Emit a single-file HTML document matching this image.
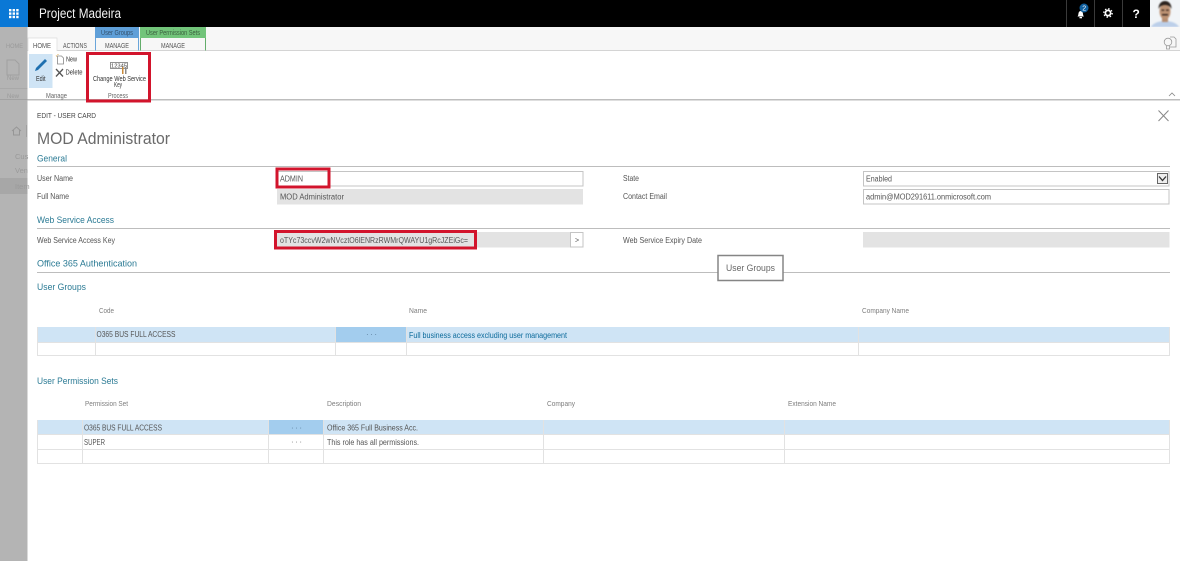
<!DOCTYPE html>
<html lang="en"><head><meta charset="utf-8"><title>Project Madeira</title>
<style>
html,body{margin:0;padding:0;width:1180px;height:561px;overflow:hidden;background:#fff}
svg{display:block;filter:blur(.35px)}
text{font-family:"Liberation Sans",sans-serif;font-size:8px;fill:#555}
.sec{font-size:9.5px;fill:#2a7a94}
.hd{fill:#7d7d7d;font-size:7.5px}
.sb{fill:#9a9a9a;font-size:7.5px}
.ph{filter:blur(.7px)}
</style></head><body>
<svg width="1180" height="561" viewBox="0 0 1180 561" xmlns="http://www.w3.org/2000/svg">
<rect width="1180" height="561" fill="#fff"/>
<!-- top bar -->
<rect width="1180" height="27" fill="#000"/>
<rect width="28" height="27" fill="#0a78d6"/>
<g fill="#fff"><rect x="9" y="9" width="2.4" height="2.4"/><rect x="12.6" y="9" width="2.4" height="2.4"/><rect x="16.2" y="9" width="2.4" height="2.4"/><rect x="9" y="12.4" width="2.4" height="2.4"/><rect x="12.6" y="12.4" width="2.4" height="2.4"/><rect x="16.2" y="12.4" width="2.4" height="2.4"/><rect x="9" y="15.8" width="2.4" height="2.4"/><rect x="12.6" y="15.8" width="2.4" height="2.4"/><rect x="16.2" y="15.8" width="2.4" height="2.4"/></g>
<text x="39" y="18" style="font-size:13.5px;fill:#f2f2f2" textLength="82" lengthAdjust="spacingAndGlyphs">Project Madeira</text>
<g fill="#3a3a3a"><rect x="1066" width="1" height="27"/><rect x="1094" width="1" height="27"/><rect x="1122" width="1" height="27"/></g>
<!-- bell -->
<path d="M1077.500 16.500c1-1 .8-3 1.200-4 .4-1 1.100-1.500 2-1.500s1.600.5 2 1.500c.4 1 .2 3 1.200 4z" fill="#fff"/>
<rect x="1079.500" y="17" width="2.500" height="1.300" fill="#fff"/>
<circle cx="1084" cy="8" r="4.500" fill="#0f5f9e"/>
<text x="1082.300" y="10.500" style="font-size:7px;fill:#fff">2</text>
<!-- gear -->
<circle cx="1108" cy="13" r="2.600" fill="none" stroke="#fff" stroke-width="1.700"/>
<circle cx="1108" cy="13" r="4.200" fill="none" stroke="#fff" stroke-width="1.300" stroke-dasharray="1.500 1.800"/>
<text x="1132.500" y="18" style="font-size:12px;font-weight:bold;fill:#fff">?</text>
<!-- photo -->
<rect x="1150" y="0" width="30" height="27" fill="#f1f4f7"/>
<g class="ph">
<path d="M1151 27c2-4 8-6 14-6s12 2 14 6z" fill="#bccfe9"/>
<rect x="1162" y="17" width="6" height="5" fill="#b58c70"/>
<ellipse cx="1165" cy="11.500" rx="5.500" ry="8" fill="#bd9273"/>
<path d="M1158.500 9c0-6 3.500-8 6.500-8s6.500 2 6.500 8c-1.500-3-3.500-4-6.500-4s-5 1-6.500 4z" fill="#2a211c"/>
<rect x="1161.500" y="9.500" width="2.800" height="1.300" fill="#3b2a22"/><rect x="1166" y="9.500" width="2.800" height="1.300" fill="#3b2a22"/>
<rect x="1162" y="14" width="6" height="1.500" fill="#3b2a22"/>
</g>
<!-- ribbon -->
<rect x="27" y="27" width="1153" height="23.500" fill="#f7f7f7"/>
<rect x="27" y="50" width="1153" height="1" fill="#d4d4d4"/>
<rect x="27" y="99" width="1153" height="1.500" fill="#bdbdbd"/>
<!-- sidebar -->
<rect x="0" y="27" width="27.500" height="534" fill="#b4b4b4"/>
<rect x="0" y="178" width="27.500" height="16" fill="#a7a7a7"/>
<rect x="0" y="88" width="27.500" height="1" fill="#a9a9a9"/>
<rect x="0" y="99" width="27.500" height="1" fill="#a2a2a2"/>
<text class="sb" x="6" y="48" textLength="17" lengthAdjust="spacingAndGlyphs" style="font-size:6.500px">HOME</text>
<path d="M7 60h8l4 4v11H7z" fill="none" stroke="#a0a0a0"/>
<text class="sb" x="7" y="80" textLength="12" lengthAdjust="spacingAndGlyphs" style="font-size:6.500px">New</text>
<text class="sb" x="7" y="98" textLength="12" lengthAdjust="spacingAndGlyphs" style="font-size:6.500px">New</text>
<path d="M14 131l4.500-4 4.500 4M15.500 130v5h6v-5" fill="none" stroke="#969696" transform="translate(-2 0)"/>
<rect x="26" y="125" width="1" height="12" fill="#a0a0a0"/>
<text class="sb" x="15" y="159">Cus</text>
<text class="sb" x="15" y="173">Ven</text>
<text class="sb" x="15" y="189">Item</text>
<!-- tabs -->
<rect x="28" y="38" width="29" height="13" fill="#fff"/>
<path d="M28 51V38H57V51" fill="none" stroke="#dcdcdc" stroke-width=".7"/>
<text x="33" y="48" textLength="18" lengthAdjust="spacingAndGlyphs" style="font-size:7.500px">HOME</text>
<text x="63" y="48" textLength="24" lengthAdjust="spacingAndGlyphs" style="font-size:7.500px">ACTIONS</text>
<rect x="95" y="27" width="44" height="11" fill="#5f9fd8"/>
<text x="101" y="35" textLength="32" lengthAdjust="spacingAndGlyphs" style="font-size:7px;fill:#33506b">User Groups</text>
<path d="M95.500 38v12.500M138.500 38v12.500" stroke="#6aa5da" fill="none"/>
<text x="105" y="48" textLength="24" lengthAdjust="spacingAndGlyphs" style="font-size:7.500px">MANAGE</text>
<rect x="140" y="27" width="66" height="11" fill="#72c47a"/>
<text x="146" y="35" textLength="54" lengthAdjust="spacingAndGlyphs" style="font-size:7px;fill:#3a5f3e">User Permission Sets</text>
<path d="M140.500 38v12.500M205.500 38v12.500" stroke="#63ad6b" fill="none"/>
<text x="161" y="48" textLength="24" lengthAdjust="spacingAndGlyphs" style="font-size:7.500px">MANAGE</text>
<!-- ribbon buttons -->
<rect x="29" y="54" width="23.500" height="34" fill="#cfe4f5"/>
<path d="M35 71l1-3 9-9 2 2-9 9z" fill="#1f70b0"/>
<text x="36" y="81" textLength="9.500" lengthAdjust="spacingAndGlyphs" style="font-size:7.500px;fill:#333">Edit</text>
<path d="M57.500 56h4l2 2v6h-6z" fill="#fff" stroke="#888" stroke-width=".8"/>
<path d="M56 55.500l1 1M58 54v1" stroke="#d9a441" stroke-width=".8"/>
<text x="66" y="61.500" textLength="11" lengthAdjust="spacingAndGlyphs" style="font-size:7.500px;fill:#333">New</text>
<path d="M56 69l7 7.500M63 69l-7 7.500" stroke="#555" stroke-width="1.300"/>
<text x="65.500" y="74.500" textLength="17" lengthAdjust="spacingAndGlyphs" style="font-size:7.500px;fill:#333">Delete</text>
<text x="46" y="98" textLength="21" lengthAdjust="spacingAndGlyphs" style="font-size:7.500px;fill:#666">Manage</text>
<text x="108" y="98" textLength="20" lengthAdjust="spacingAndGlyphs" style="font-size:7.500px;fill:#666">Process</text>
<!-- process icon -->
<rect x="110.500" y="62.500" width="17" height="6" fill="#fff" stroke="#777" stroke-width=".8"/>
<text x="111" y="67.500" textLength="16" lengthAdjust="spacingAndGlyphs" style="font-size:5px;fill:#444">12345</text>
<rect x="122" y="67" width="1.500" height="7" fill="#c98a3a"/><rect x="125" y="67" width="1.500" height="7" fill="#8a8a8a"/>
<text x="93" y="81" textLength="53" lengthAdjust="spacingAndGlyphs" style="font-size:7px;fill:#333">Change Web Service</text>
<text x="114" y="87" textLength="8" lengthAdjust="spacingAndGlyphs" style="font-size:7px;fill:#333">Key</text>
<rect x="87.500" y="53.500" width="62" height="47.500" fill="none" stroke="#d2142c" stroke-width="3"/>
<!-- bulb and chevron -->
<circle cx="1168" cy="42" r="3.800" fill="none" stroke="#9a9a9a" stroke-width=".8"/>
<path d="M1170 37h4l2 2v8h-6M1166.500 46v3h3v-3" fill="none" stroke="#9a9a9a" stroke-width=".8"/>
<path d="M1169 96l3-3 3 3" fill="none" stroke="#888" stroke-width=".8"/>
<!-- close -->
<path d="M1158.500 110.500l10 10.500M1168.500 110.500l-10 10.500" stroke="#888" stroke-width="1"/>
<!-- header -->
<text x="37" y="118" textLength="59" lengthAdjust="spacingAndGlyphs" style="font-size:7.500px;fill:#444">EDIT - USER CARD</text>
<text x="37" y="144" textLength="133" lengthAdjust="spacingAndGlyphs" style="font-size:17px;fill:#6a6a6a">MOD Administrator</text>
<!-- general -->
<text class="sec" x="37" y="161.500" textLength="30" lengthAdjust="spacingAndGlyphs">General</text>
<rect x="37" y="166" width="1133" height="1" fill="#bdbdbd"/>
<text x="37" y="181" textLength="36" lengthAdjust="spacingAndGlyphs">User Name</text>
<text x="37" y="199" textLength="32" lengthAdjust="spacingAndGlyphs">Full Name</text>
<rect x="277.500" y="171.500" width="305.500" height="14.500" fill="#fff" stroke="#c4c4c4"/>
<text x="280" y="181.500" textLength="23" lengthAdjust="spacingAndGlyphs">ADMIN</text>
<rect x="277" y="189" width="306" height="15.500" fill="#e3e3e3"/>
<text x="280" y="199.500" textLength="64" lengthAdjust="spacingAndGlyphs">MOD Administrator</text>
<rect x="277" y="169" width="52" height="18" fill="none" stroke="#d2142c" stroke-width="3"/>
<text x="623" y="181" textLength="16" lengthAdjust="spacingAndGlyphs">State</text>
<text x="623" y="199" textLength="44" lengthAdjust="spacingAndGlyphs">Contact Email</text>
<rect x="863.500" y="171.500" width="305.500" height="14.500" fill="#fff" stroke="#c4c4c4"/>
<text x="866" y="181.500" textLength="26" lengthAdjust="spacingAndGlyphs">Enabled</text>
<rect x="1157.500" y="173.500" width="10" height="10" fill="#eee" stroke="#666"/>
<path d="M1159 176.500l3.500 4 3.500-4" fill="none" stroke="#333" stroke-width="1.300"/>
<rect x="863.500" y="189.500" width="305.500" height="14.500" fill="#fff" stroke="#c4c4c4"/>
<text x="866" y="199.500" textLength="125" lengthAdjust="spacingAndGlyphs">admin@MOD291611.onmicrosoft.com</text>
<!-- web service -->
<text class="sec" x="37" y="223" textLength="77" lengthAdjust="spacingAndGlyphs">Web Service Access</text>
<rect x="37" y="228" width="1133" height="1" fill="#bdbdbd"/>
<text x="37" y="243" textLength="78" lengthAdjust="spacingAndGlyphs">Web Service Access Key</text>
<rect x="277" y="232" width="293" height="15.500" fill="#e3e3e3"/>
<rect x="570.500" y="232.500" width="12.500" height="14.500" fill="#fff" stroke="#c4c4c4"/>
<text x="575" y="242.500" style="font-size:7px">&gt;</text>
<text x="280" y="243" textLength="188" lengthAdjust="spacingAndGlyphs">oTYc73ccvW2wNVcztO6lENRzRWMrQWAYU1gRcJZEiGc=</text>
<rect x="275.500" y="231.500" width="200" height="16.500" fill="none" stroke="#d2142c" stroke-width="3"/>
<text x="623" y="243" textLength="79" lengthAdjust="spacingAndGlyphs">Web Service Expiry Date</text>
<rect x="863" y="232" width="306.500" height="15.500" fill="#e3e3e3"/>
<!-- office -->
<text class="sec" x="37" y="266.500" textLength="100" lengthAdjust="spacingAndGlyphs">Office 365 Authentication</text>
<rect x="37" y="272" width="1133" height="1" fill="#bdbdbd"/>
<rect x="718" y="255.500" width="65" height="25" fill="#fff" stroke="#858585" stroke-width="1.500"/>
<text x="726" y="271" textLength="49" lengthAdjust="spacingAndGlyphs" style="font-size:9.500px;fill:#666">User Groups</text>
<!-- user groups table -->
<text class="sec" x="37" y="290" textLength="49" lengthAdjust="spacingAndGlyphs">User Groups</text>
<text class="hd" x="99" y="313" textLength="15" lengthAdjust="spacingAndGlyphs">Code</text>
<text class="hd" x="409" y="313" textLength="18" lengthAdjust="spacingAndGlyphs">Name</text>
<text class="hd" x="862" y="313" textLength="47" lengthAdjust="spacingAndGlyphs">Company Name</text>
<rect x="37.500" y="327" width="1132" height="15" fill="#cfe4f5"/>
<rect x="336" y="327" width="70" height="15" fill="#a3cdee"/>
<g fill="none" stroke="#e2e2e2"><path d="M37.500 327v28.500h1132V327M37.500 342.500h1132"/><path d="M95.500 327v28.500M335.500 327v28.500M406.500 327v28.500M858.500 327v28.500"/></g>
<text x="96.500" y="337" textLength="79" lengthAdjust="spacingAndGlyphs">O365 BUS FULL ACCESS</text>
<text x="366" y="337" style="font-size:8px;fill:#5b7e9c;letter-spacing:1.500px">···</text>
<text x="409" y="338" textLength="158" lengthAdjust="spacingAndGlyphs" style="fill:#0b6a9b">Full business access excluding user management</text>
<!-- permission sets table -->
<text class="sec" x="37" y="384" textLength="81" lengthAdjust="spacingAndGlyphs">User Permission Sets</text>
<text class="hd" x="85" y="406" textLength="43" lengthAdjust="spacingAndGlyphs">Permission Set</text>
<text class="hd" x="327" y="406" textLength="34" lengthAdjust="spacingAndGlyphs">Description</text>
<text class="hd" x="547" y="406" textLength="28" lengthAdjust="spacingAndGlyphs">Company</text>
<text class="hd" x="788" y="406" textLength="48" lengthAdjust="spacingAndGlyphs">Extension Name</text>
<rect x="37.500" y="420" width="1132" height="14.500" fill="#cfe4f5"/>
<rect x="269" y="420" width="54" height="14.500" fill="#a3cdee"/>
<g fill="none" stroke="#e2e2e2"><path d="M37.500 420v43.500h1132V420M37.500 434.500h1132M37.500 449.500h1132"/><path d="M82.500 420v43.500M268.500 420v43.500M323.500 420v43.500M543.500 420v43.500M784.500 420v43.500"/></g>
<text x="84" y="430.500" textLength="78" lengthAdjust="spacingAndGlyphs">O365 BUS FULL ACCESS</text>
<text x="291" y="430.500" style="font-size:8px;fill:#5b7e9c;letter-spacing:1.500px">···</text>
<text x="327" y="430.500" textLength="91" lengthAdjust="spacingAndGlyphs">Office 365 Full Business Acc.</text>
<text x="84" y="445" textLength="21" lengthAdjust="spacingAndGlyphs">SUPER</text>
<text x="291" y="444.500" style="font-size:8px;fill:#777;letter-spacing:1.500px">···</text>
<text x="327" y="445" textLength="92" lengthAdjust="spacingAndGlyphs">This role has all permissions.</text>
</svg>
</body></html>
